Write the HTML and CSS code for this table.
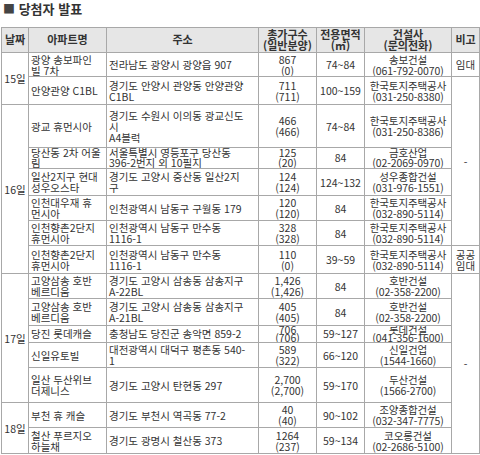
FILE: index.html
```html
<!DOCTYPE html>
<html lang="ko">
<head>
<meta charset="utf-8">
<link rel="stylesheet" href="styles.css">
</head>
<body>
<div class="page">
  <h1 class="title"><span class="sq">■</span> 당첨자 발표</h1>
  <table class="tbl">
    <colgroup>
      <col class="c-date"><col class="c-name"><col class="c-addr"><col class="c-units"><col class="c-area"><col class="c-co"><col class="c-note">
    </colgroup>
    <thead>
      <tr class="hd">
        <th>날짜</th><th>아파트명</th><th>주소</th><th>총가구수<br>(일반분양)</th><th>전용면적<br>(㎡)</th><th>건설사<br>(문의전화)</th><th>비고</th>
      </tr>
    </thead>
    <tbody>
      <tr class="r1">
        <td rowspan="2" class="date">15일</td>
        <td class="l">광양 송보파인<br>빌 7차</td><td class="l">전라남도 광양시 광양읍 907</td><td>867<br>(0)</td><td>74~84</td><td class="co">송보건설<br>(061-792-0070)</td><td>임대</td>
      </tr>
      <tr class="r2">
        <td class="l">안양관양 C1BL</td><td class="l">경기도 안양시 관양동 안양관양<br>C1BL</td><td>711<br>(711)</td><td>100~159</td><td class="co">한국토지주택공사<br>(031-250-8380)</td><td rowspan="6">-</td>
      </tr>
      <tr class="r3">
        <td rowspan="6" class="date">16일</td>
        <td class="l">광교 휴먼시아</td><td class="l">경기도 수원시 이의동 광교신도<br>시<br>A4블럭</td><td>466<br>(466)</td><td>74~84</td><td class="co">한국토지주택공사<br>(031-250-8386)</td>
      </tr>
      <tr class="r4">
        <td class="l">당산동 2차 어울<br>림</td><td class="l">서울특별시 영등포구 당산동<br>396-2번지 외 10필지</td><td>125<br>(20)</td><td>84</td><td class="co">금호산업<br>(02-2069-0970)</td>
      </tr>
      <tr class="r5">
        <td class="l">일산2지구 현대<br>성우오스타</td><td class="l">경기도 고양시 중산동 일산2지<br>구</td><td>124<br>(124)</td><td>124~132</td><td class="co">성우종합건설<br>(031-976-1551)</td>
      </tr>
      <tr class="r6">
        <td class="l">인천대우재 휴<br>먼시아</td><td class="l">인천광역시 남동구 구월동 179</td><td>120<br>(120)</td><td>84</td><td class="co">한국토지주택공사<br>(032-890-5114)</td>
      </tr>
      <tr class="r7">
        <td class="l">인천향촌2단지<br>휴먼시아</td><td class="l">인천광역시 남동구 만수동<br>1116-1</td><td>328<br>(328)</td><td>84</td><td class="co">한국토지주택공사<br>(032-890-5114)</td>
      </tr>
      <tr class="r8">
        <td class="l">인천향촌2단지<br>휴먼시아</td><td class="l">인천광역시 남동구 만수동<br>1116-1</td><td>110<br>(0)</td><td>39~59</td><td class="co">한국토지주택공사<br>(032-890-5114)</td><td>공공<br>임대</td>
      </tr>
      <tr class="r9">
        <td rowspan="5" class="date">17일</td>
        <td class="l">고양삼송 호반<br>베르디움</td><td class="l">경기도 고양시 삼송동 삼송지구<br>A-22BL</td><td>1,426<br>(1,426)</td><td>84</td><td class="co">호반건설<br>(02-358-2200)</td><td rowspan="7">-</td>
      </tr>
      <tr class="r10">
        <td class="l">고양삼송 호반<br>베르디움</td><td class="l">경기도 고양시 삼송동 삼송지구<br>A-21BL</td><td>405<br>(405)</td><td>84</td><td class="co">호반건설<br>(02-358-2200)</td>
      </tr>
      <tr class="r11">
        <td class="l">당진 롯데캐슬</td><td class="l">충청남도 당진군 송악면 859-2</td><td>706<br>(706)</td><td>59~127</td><td class="co">롯데건설<br>(041-356-1600)</td>
      </tr>
      <tr class="r12">
        <td class="l">신일유토빌</td><td class="l">대전광역시 대덕구 평촌동 540-<br>1</td><td>589<br>(322)</td><td>66~120</td><td class="co">신일건업<br>(1544-1660)</td>
      </tr>
      <tr class="r13">
        <td class="l">일산 두산위브<br>더제니스</td><td class="l">경기도 고양시 탄현동 297</td><td>2,700<br>(2,700)</td><td>59~170</td><td class="co">두산건설<br>(1566-2700)</td>
      </tr>
      <tr class="r14">
        <td rowspan="2" class="date">18일</td>
        <td class="l">부천 휴 캐슬</td><td class="l">경기도 부천시 역곡동 77-2</td><td>40<br>(40)</td><td>90~102</td><td class="co">조양종합건설<br>(032-347-7775)</td>
      </tr>
      <tr class="r15">
        <td class="l">철산 푸르지오<br>하늘채</td><td class="l">경기도 광명시 철산동 373</td><td>1264<br>(237)</td><td>59~134</td><td class="co">코오롱건설<br>(02-2686-5100)</td>
      </tr>
    </tbody>
  </table>
</div>
</body>
</html>
```
FILE: styles.css
```css
html, body {
  margin: 0;
  padding: 0;
  background: #fff;
}
.page {
  width: 480px;
  font-family: "Noto Sans CJK KR", "Noto Sans", sans-serif;
  color: #333;
}
.title {
  margin: 0;
  padding: 2px 0 0 3px;
  height: 27px;
  box-sizing: border-box;
  font-size: 13px;
  line-height: 14px;
  font-weight: bold;
  color: #333;
}
.sq {
  font-size: 12px;
  color: #444;
}
.tbl {
  border-collapse: collapse;
  table-layout: fixed;
  width: 479px;
  margin-left: 1px;
  font-size: 10.5px;
  line-height: 11px;
  border: 1px solid #9a9a9a;
}
.c-date { width: 27px; }
.c-name { width: 78px; }
.c-addr { width: 152px; }
.c-units { width: 58px; }
.c-area { width: 48px; }
.c-co { width: 87px; }
.c-note { width: 28px; }
.tbl th, .tbl td {
  border: 1px solid #a8a8a8;
  padding: 0 1px;
  text-align: center;
  vertical-align: middle;
  white-space: nowrap;
}
.tbl td {
  overflow: hidden;
}
.tbl th {
  background: #e6e6e6;
  font-weight: bold;
  font-size: 11px;
  line-height: 11.5px;
  color: #333;
}
.tbl td.l {
  text-align: left;
  padding-left: 2px;
}
.tbl td.co {
  padding: 0;
  letter-spacing: -0.1px;
}
.tbl td.date {
  padding: 0;
}
.hd { height: 25px; }
.r1 { height: 24px; }
.r2 { height: 28px; }
.r3 { height: 43px; }
.r4 { height: 21px; line-height: 10px; }
.r5 { height: 27px; }
.r6 { height: 25px; }
.r7 { height: 25px; }
.r8 { height: 28px; }
.r9 { height: 25px; }
.r10 { height: 27px; }
.r11 { height: 17px; line-height: 8px; }
.r12 { height: 25px; }
.r13 { height: 35px; }
.r14 { height: 25px; }
.r15 { height: 26px; }
```
